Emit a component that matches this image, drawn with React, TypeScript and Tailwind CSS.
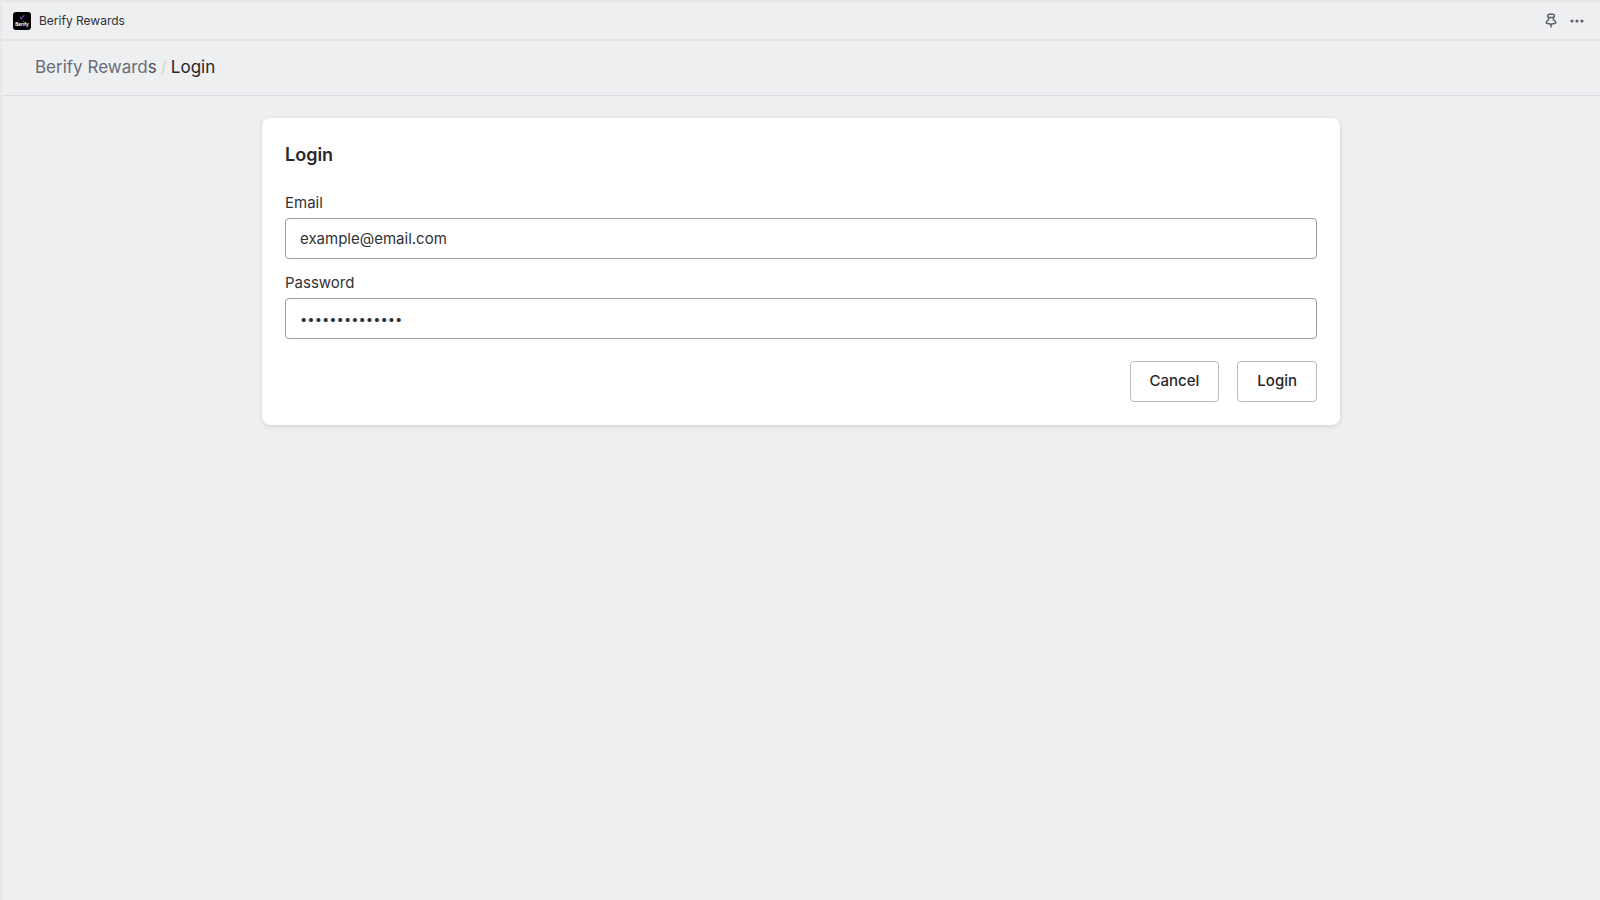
import React, { useState } from 'react';

interface FieldProps {
  id: string;
  label: string;
  type: string;
  value: string;
  onChange: (value: string) => void;
}

const Field: React.FC<FieldProps> = ({ id, label, type, value, onChange }) => {
  // Password dots are set smaller than regular input text
  const textSize = type === 'password' ? 'text-[13px]' : 'text-[15px]';

  return (
    <div>
      <label htmlFor={id} className="block mb-[3px] text-[15px] leading-6 text-[#303236]">
        {label}
      </label>
      <input
        id={id}
        type={type}
        value={value}
        onChange={(e) => onChange(e.target.value)}
        className={`block w-full h-[41px] px-3.5 rounded-[4px] border border-[#9a9da6] bg-white text-[#303236] ${textSize}`}
      />
    </div>
  );
};

const AppLogo = () => (
  <svg viewBox="0 0 18 18" className="w-[18px] h-[18px]" aria-hidden="true">
    <rect width="18" height="18" rx="3" fill="#000" />
    <path d="M7 5.3l1.3 1.6 2.4-3" fill="none" stroke="#8d3fb8" strokeWidth="1.1" />
    <circle cx="6.8" cy="5" r="0.6" fill="#5a50c8" />
    <circle cx="10.9" cy="3.6" r="0.6" fill="#d0457a" />
    <text x="9" y="14.2" textAnchor="middle" fontSize="4.6" fontWeight="700" fill="#fff">
      Berify
    </text>
  </svg>
);

const PinIcon = () => (
  <svg viewBox="0 0 12 15" className="w-3 h-[15px]" fill="none" stroke="#5c5f6b" strokeWidth="1.5" strokeLinejoin="round" strokeLinecap="round" aria-hidden="true">
    <path d="M4.2 1.2h3.6c1 0 1.6.8 1.6 1.7S8.800 4.400 7.900 4.400H4.100c-.9 0-1.500-.6-1.500-1.500S3.200 1.200 4.200 1.200z" />
    <path d="M3.600 4.400v2.400C2 7.600 1.200 8.700 1.200 9.600c0 .4.200.6.6.7L6 11.200l4.200-.9c.4-.1.6-.3.6-.7 0-.9-.8-2-2.400-2.800V4.400" />
    <path d="M6 11.200V14" />
  </svg>
);

const DotsIcon = () => (
  <svg viewBox="0 0 14 4" className="w-3.5 h-1" fill="#5c5f6b" aria-hidden="true">
    <circle cx="2" cy="2" r="1.6" />
    <circle cx="7" cy="2" r="1.6" />
    <circle cx="12" cy="2" r="1.6" />
  </svg>
);

const App: React.FC = () => {
  const [email, setEmail] = useState('example@email.com');
  const [password, setPassword] = useState('berify-rewards');

  return (
    <div className="min-h-screen border-l-2 border-t-2 border-[#e5e7e9] bg-[#eeeff1] font-['Inter',sans-serif] text-[#303236]">
      <header className="flex items-center justify-between h-[39px] pl-[11px] pr-4 border-b-2 border-[#e2e3e5]">
        <div className="flex items-center gap-2">
          <AppLogo />
          <span className="text-xs">Berify Rewards</span>
        </div>
        <div className="flex items-center gap-[13px]">
          <button type="button" aria-label="Pin app">
            <PinIcon />
          </button>
          <button type="button" aria-label="More actions" className="flex items-center h-5">
            <DotsIcon />
          </button>
        </div>
      </header>

      <nav aria-label="Breadcrumb" className="flex items-center gap-1 h-[55px] px-[33px] border-b border-[#dcdee1] text-[17px]">
        <a href="#" className="text-[#696d78]">
          Berify Reward<span className="text-[#4a4d54]">s</span>
        </a>
        <span className="text-[#d0d2d5]">/</span>
        <span className="text-[#252629]">Login</span>
      </nav>

      <main className="px-6 py-[22px]">
        <form
          onSubmit={(e) => e.preventDefault()}
          className="max-w-[1078px] mx-auto p-[23px] rounded-lg bg-white shadow-[0_1px_4px_rgba(23,24,24,0.14)]"
        >
          <h1 className="mb-[22px] text-lg leading-[28px] font-semibold text-[#27282b]">Login</h1>
          <div className="flex flex-col gap-3">
            <Field id="email" label="Email" type="email" value={email} onChange={setEmail} />
            <Field id="password" label="Password" type="password" value={password} onChange={setPassword} />
          </div>
          <div className="flex justify-end gap-[18px] mt-[22px]">
            <button type="button" className="h-[41px] px-[19px] rounded-[4px] border border-[#b9bcc4] text-[15px] font-medium text-[#27282b]">
              Cancel
            </button>
            <button type="submit" className="h-[41px] px-[19px] rounded-[4px] border border-[#b9bcc4] text-[15px] font-medium text-[#27282b]">
              Login
            </button>
          </div>
        </form>
      </main>
    </div>
  );
};

export default App;
